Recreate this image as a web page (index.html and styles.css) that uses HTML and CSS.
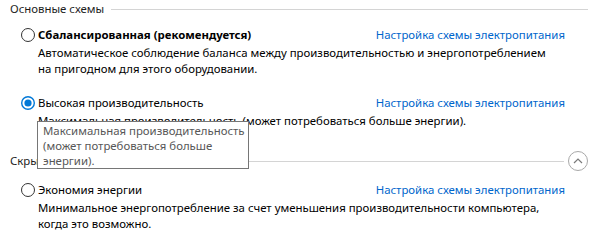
FILE: index.html
```html
<!DOCTYPE html>
<html lang="ru">
<head>
  <meta charset="UTF-8">
  <title>Электропитание</title>
  <link rel="stylesheet" href="styles.css">
</head>
<body>
  <div class="power-plans">
    <div class="group-head">
      <span class="group-title">Основные схемы</span>
      <span class="group-rule"></span>
    </div>

    <div class="plan">
      <label class="plan-name bold">
        <svg class="radio" width="14" height="14" viewBox="0 0 14 14"><circle cx="7" cy="7" r="6.5" fill="#fff" stroke="#333" stroke-width="1"/></svg>
        Сбалансированная (рекомендуется)
      </label>
      <a class="plan-link" href="#">Настройка схемы электропитания</a>
      <p class="plan-desc">Автоматическое соблюдение баланса между производительностью и энергопотреблением на пригодном для этого оборудовании.</p>
    </div>

    <div class="plan">
      <label class="plan-name">
        <svg class="radio" width="14" height="14" viewBox="0 0 14 14"><circle cx="7" cy="7" r="6.3" fill="#fff" stroke="#0078d7" stroke-width="1.4"/><circle cx="7" cy="7" r="3.6" fill="#0078d7"/></svg>
        Высокая производительность
      </label>
      <a class="plan-link" href="#">Настройка схемы электропитания</a>
      <p class="plan-desc">Максимальная производительность (может потребоваться больше энергии).</p>
    </div>

    <div class="group-head hidden-head">
      <span class="group-title">Скрыть дополнительные схемы</span>
      <span class="group-rule"></span>
      <button class="collapse-btn" title="Скрыть">
        <svg width="12" height="12" viewBox="0 0 12 12"><path d="M2 8 L6 4 L10 8" fill="none" stroke="#7a7a7a" stroke-width="1.2"/></svg>
      </button>
    </div>

    <div class="plan">
      <label class="plan-name">
        <svg class="radio" width="14" height="14" viewBox="0 0 14 14"><circle cx="7" cy="7" r="6.5" fill="#fff" stroke="#333" stroke-width="1"/></svg>
        Экономия энергии
      </label>
      <a class="plan-link" href="#">Настройка схемы электропитания</a>
      <p class="plan-desc">Минимальное энергопотребление за счет уменьшения производительности компьютера, когда это возможно.</p>
    </div>

    <!-- tooltip shown over the high performance plan -->
    <div class="tooltip">Максимальная производительность<br>(может потребоваться больше<br>энергии).</div>
  </div>
</body>
</html>
```

FILE: styles.css
```css
body {
  margin: 0;
  background: #fff;
  font-family: 'Noto Sans', 'Liberation Sans', sans-serif;
  font-size: 11.4px;
  line-height: 16px;
  color: #000;
}
.power-plans {
  position: relative;
  padding: 1px 10px 0 10px;
}
.group-head {
  display: flex;
  align-items: center;
  height: 16px;
  color: #1e1e1e;
}
.group-rule {
  flex: 1;
  height: 1px;
  margin-left: 7px;
  background: #d4d4d4;
}
.hidden-head {
  margin-top: 24px;
}
.collapse-btn {
  width: 20px;
  height: 20px;
  margin-left: 4px;
  padding: 0;
  border: 1px solid #a8a8a8;
  border-radius: 50%;
  background: #fff;
  display: flex;
  align-items: center;
  justify-content: center;
}
.plan {
  display: grid;
  grid-template-columns: 1fr auto;
  margin-top: 10px;
  padding: 0 23px 0 11px;
}
.plan + .plan {
  margin-top: 18px;
}
.hidden-head + .plan {
  margin-top: 13px;
}
.plan-name {
  display: flex;
  align-items: center;
  gap: 3px;
}
.bold {
  font-weight: bold;
}
.plan-link {
  color: #0066cc;
  text-decoration: none;
}
.plan-desc {
  grid-column: 1 / 3;
  margin: 2px 4px 0 17px;
}
.tooltip {
  position: absolute;
  left: 37px;
  top: 121px;
  width: 200px;
  height: 45px;
  padding: 1px 5px 0;
  border: 1px solid #767676;
  background: #fff;
  color: #575757;
  line-height: 15px;
  white-space: nowrap;
}
```
